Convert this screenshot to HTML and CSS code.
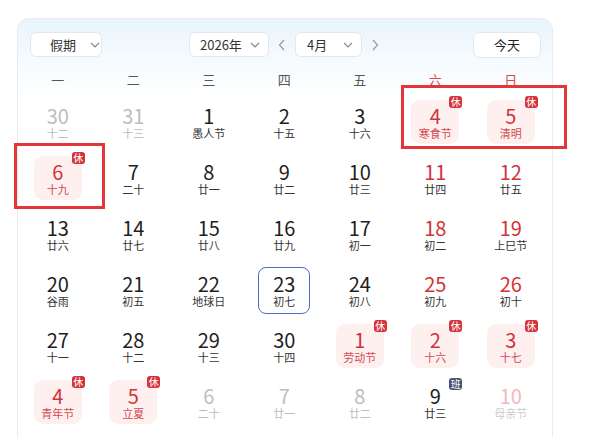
FILE: index.html
```html
<!DOCTYPE html>
<html lang="zh-CN">
<head>
    <meta charset="UTF-8">
    <meta name="viewport" content="width=device-width, initial-scale=1.0">
    <title>万年历</title>
    <link rel="stylesheet" href="styles.css">
</head>
<body>
    <div class="calendar">
        <!-- 顶部工具栏 -->
        <div class="toolbar">
            <div class="select select-holiday">
                <span>假期</span>
                <svg class="chev" width="10" height="6" viewBox="0 0 10 6"><path d="M1 1l4 4 4-4" fill="none" stroke="#888" stroke-width="1.2"/></svg>
            </div>
            <div class="nav">
                <div class="select select-year">
                    <span>2026年</span>
                    <svg class="chev" width="10" height="6" viewBox="0 0 10 6"><path d="M1 1l4 4 4-4" fill="none" stroke="#888" stroke-width="1.2"/></svg>
                </div>
                <svg class="arrow" width="8" height="12" viewBox="0 0 8 12"><path d="M6 1L1.5 6 6 11" fill="none" stroke="#999" stroke-width="1.2"/></svg>
                <div class="select select-month">
                    <span>4月</span>
                    <svg class="chev" width="10" height="6" viewBox="0 0 10 6"><path d="M1 1l4 4 4-4" fill="none" stroke="#888" stroke-width="1.2"/></svg>
                </div>
                <svg class="arrow" width="8" height="12" viewBox="0 0 8 12"><path d="M2 1l4.5 5L2 11" fill="none" stroke="#999" stroke-width="1.2"/></svg>
            </div>
            <div class="today-btn">今天</div>
        </div>

        <!-- 星期 -->
        <div class="weekdays">
            <div>一</div><div>二</div><div>三</div><div>四</div><div>五</div>
            <div class="wk-red">六</div><div class="wk-red">日</div>
        </div>

        <!-- 日期 -->
        <div class="grid">
            <div class="cell"><div class="day other"><span class="num">30</span><span class="lunar">十二</span></div></div>
            <div class="cell"><div class="day other"><span class="num">31</span><span class="lunar">十三</span></div></div>
            <div class="cell"><div class="day"><span class="num">1</span><span class="lunar">愚人节</span></div></div>
            <div class="cell"><div class="day"><span class="num">2</span><span class="lunar">十五</span></div></div>
            <div class="cell"><div class="day"><span class="num">3</span><span class="lunar">十六</span></div></div>
            <div class="cell"><div class="day rest"><span class="num">4</span><span class="lunar">寒食节</span><span class="badge">休</span></div></div>
            <div class="cell"><div class="day rest"><span class="num">5</span><span class="lunar">清明</span><span class="badge">休</span></div></div>

            <div class="cell"><div class="day rest"><span class="num">6</span><span class="lunar">十九</span><span class="badge">休</span></div></div>
            <div class="cell"><div class="day"><span class="num">7</span><span class="lunar">二十</span></div></div>
            <div class="cell"><div class="day"><span class="num">8</span><span class="lunar">廿一</span></div></div>
            <div class="cell"><div class="day"><span class="num">9</span><span class="lunar">廿二</span></div></div>
            <div class="cell"><div class="day"><span class="num">10</span><span class="lunar">廿三</span></div></div>
            <div class="cell"><div class="day weekend"><span class="num">11</span><span class="lunar">廿四</span></div></div>
            <div class="cell"><div class="day weekend"><span class="num">12</span><span class="lunar">廿五</span></div></div>

            <div class="cell"><div class="day"><span class="num">13</span><span class="lunar">廿六</span></div></div>
            <div class="cell"><div class="day"><span class="num">14</span><span class="lunar">廿七</span></div></div>
            <div class="cell"><div class="day"><span class="num">15</span><span class="lunar">廿八</span></div></div>
            <div class="cell"><div class="day"><span class="num">16</span><span class="lunar">廿九</span></div></div>
            <div class="cell"><div class="day"><span class="num">17</span><span class="lunar">初一</span></div></div>
            <div class="cell"><div class="day weekend"><span class="num">18</span><span class="lunar">初二</span></div></div>
            <div class="cell"><div class="day weekend"><span class="num">19</span><span class="lunar">上巳节</span></div></div>

            <div class="cell"><div class="day"><span class="num">20</span><span class="lunar">谷雨</span></div></div>
            <div class="cell"><div class="day"><span class="num">21</span><span class="lunar">初五</span></div></div>
            <div class="cell"><div class="day"><span class="num">22</span><span class="lunar">地球日</span></div></div>
            <div class="cell"><div class="day today"><span class="num">23</span><span class="lunar">初七</span></div></div>
            <div class="cell"><div class="day"><span class="num">24</span><span class="lunar">初八</span></div></div>
            <div class="cell"><div class="day weekend"><span class="num">25</span><span class="lunar">初九</span></div></div>
            <div class="cell"><div class="day weekend"><span class="num">26</span><span class="lunar">初十</span></div></div>

            <div class="cell"><div class="day"><span class="num">27</span><span class="lunar">十一</span></div></div>
            <div class="cell"><div class="day"><span class="num">28</span><span class="lunar">十二</span></div></div>
            <div class="cell"><div class="day"><span class="num">29</span><span class="lunar">十三</span></div></div>
            <div class="cell"><div class="day"><span class="num">30</span><span class="lunar">十四</span></div></div>
            <div class="cell"><div class="day rest"><span class="num">1</span><span class="lunar">劳动节</span><span class="badge">休</span></div></div>
            <div class="cell"><div class="day rest"><span class="num">2</span><span class="lunar">十六</span><span class="badge">休</span></div></div>
            <div class="cell"><div class="day rest"><span class="num">3</span><span class="lunar">十七</span><span class="badge">休</span></div></div>

            <div class="cell"><div class="day rest"><span class="num">4</span><span class="lunar">青年节</span><span class="badge">休</span></div></div>
            <div class="cell"><div class="day rest"><span class="num">5</span><span class="lunar">立夏</span><span class="badge">休</span></div></div>
            <div class="cell"><div class="day other"><span class="num">6</span><span class="lunar">二十</span></div></div>
            <div class="cell"><div class="day other"><span class="num">7</span><span class="lunar">廿一</span></div></div>
            <div class="cell"><div class="day other"><span class="num">8</span><span class="lunar">廿二</span></div></div>
            <div class="cell"><div class="day"><span class="num">9</span><span class="lunar">廿三</span><span class="badge work">班</span></div></div>
            <div class="cell"><div class="day other-weekend"><span class="num">10</span><span class="lunar">母亲节</span></div></div>
        </div>
    </div>

    <!-- 标注框 -->
    <div class="mark mark-qingming"></div>
    <div class="mark mark-six"></div>
</body>
</html>
```

FILE: styles.css
```css
body {
    margin: 0;
    background-color: #fff;
    font-family: "Noto Sans CJK SC", "Noto Sans", sans-serif;
    color: #222;
    overflow: hidden;
}
.calendar {
    box-sizing: border-box;
    width: 536px;
    height: 460px;
    margin: 18px 0 0 17px;
    padding: 13px 3.5px 0 2px;
    border: 1px solid #e6ecf1;
    border-radius: 12px;
    background: linear-gradient(#e9f4fc 0, #f6fbfe 45px, #fff 80px);
}
.toolbar {
    display: flex;
    align-items: center;
    margin: 0 7.5px 0 10px;
    height: 25px;
}
.select {
    box-sizing: border-box;
    flex-shrink: 0;
    height: 25px;
    display: flex;
    align-items: center;
    white-space: nowrap;
    background-color: #fff;
    border: 1px solid #e4e7eb;
    border-radius: 6px;
    font-size: 13px;
    color: #333;
}
.select-holiday {
    width: 72px;
    padding-left: 19px;
}
.select-holiday .chev {
    margin-left: 14px;
}
.select-year {
    width: 80px;
    padding-left: 10px;
}
.select-year .chev {
    margin-left: auto;
    margin-right: 8px;
}
.select-month {
    width: 67px;
    padding-left: 11px;
}
.select-month .chev {
    margin-left: auto;
    margin-right: 8px;
}
.nav {
    display: flex;
    align-items: center;
    gap: 9px;
    margin-left: 87px;
}
.arrow {
    display: block;
    flex-shrink: 0;
}
.today-btn {
    box-sizing: border-box;
    flex-shrink: 0;
    width: 68px;
    height: 26px;
    margin-left: auto;
    line-height: 24px;
    text-align: center;
    background-color: #fff;
    border: 1px solid #e4e7eb;
    border-radius: 7px;
    font-size: 13px;
    color: #222;
}
.weekdays {
    display: grid;
    grid-template-columns: repeat(7, 75.5px);
    height: 28px;
    margin-top: 9px;
    line-height: 28px;
    text-align: center;
    font-size: 13px;
    color: #555;
}
.wk-red {
    color: #d84a4a;
}
.grid {
    display: grid;
    grid-template-columns: repeat(7, 75.5px);
    grid-auto-rows: 56px;
}
.cell {
    display: flex;
    align-items: center;
    justify-content: center;
}
.day {
    position: relative;
    box-sizing: border-box;
    width: 48px;
    height: 44px;
    border-radius: 9px;
    display: flex;
    flex-direction: column;
    align-items: center;
    justify-content: center;
}
.num {
    font-size: 20px;
    line-height: 21px;
    color: #1f1f1f;
}
.lunar {
    font-size: 11px;
    line-height: 14px;
    color: #333;
}
.other .num,
.other .lunar {
    color: #bdbdbd;
}
.other-weekend .num {
    color: #f2b9bb;
}
.other-weekend .lunar {
    color: #ccc;
}
.weekend .num {
    color: #d3333a;
}
.rest {
    background-color: #fdf0ef;
}
.rest .num {
    color: #d3333a;
}
.rest .lunar {
    color: #d44a4f;
}
.today {
    width: 52px;
    height: 47px;
    border: 1.5px solid #4c6acb;
    border-radius: 8px;
}
.badge {
    position: absolute;
    top: -4px;
    right: -3px;
    width: 13px;
    height: 12px;
    border-radius: 3px;
    background-color: #d5333b;
    color: #fff;
    font-size: 10px;
    line-height: 12px;
    text-align: center;
}
.badge.work {
    top: -2px;
    background-color: #4a5572;
}
.mark {
    position: absolute;
    box-sizing: border-box;
    border: 3px solid #e3353a;
}
.mark-qingming {
    left: 401px;
    top: 85px;
    width: 166px;
    height: 64px;
}
.mark-six {
    left: 14px;
    top: 143px;
    width: 91px;
    height: 66px;
}
```
